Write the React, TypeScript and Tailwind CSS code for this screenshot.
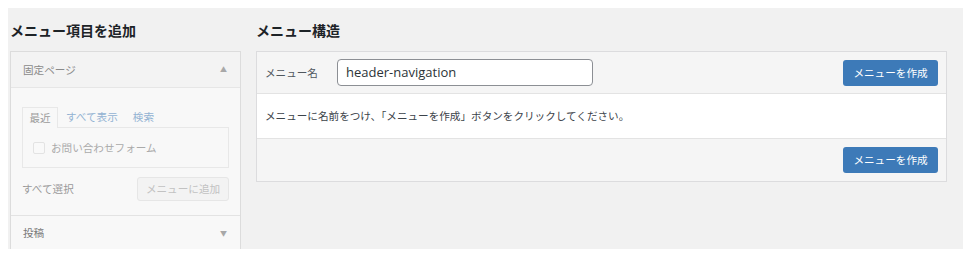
const font = { fontFamily: '"Noto Sans CJK JP", "Noto Sans", sans-serif' };

const MenuPages = () => (
  <div className="w-[231px]">
    <h2 className="text-[14px] leading-[20px] font-bold text-[#1d2327] mb-[11px]">メニュー項目を追加</h2>
    <div className="border border-[#dcdcdc] bg-[#f8f8f8] h-[200px] overflow-hidden">
      {/* 固定ページ */}
      <div className="h-[36px] flex items-center justify-between pl-[12px] pr-[13px] bg-[#f3f3f3] border-b border-[#e6e6e6]">
        <span className="text-[10.6px] text-[#8a8a8a]">固定ページ</span>
        <span className="text-[7px] text-[#a8a8a8]">▲</span>
      </div>
      <div className="pt-[18px] pl-[11px] pr-[11px] pb-[14px] border-b border-[#e3e3e3]">
        <div className="flex items-end h-[21px] text-[10.6px]">
          <div className="w-[36px] h-[21px] border border-b-0 border-[#e8e8e8] bg-[#f8f8f8] flex items-center justify-center text-[#9a9a9a] relative top-[1px]">最近</div>
          <span className="ml-[8px] h-[21px] flex items-center text-[#93b3d3]">すべて表示</span>
          <span className="ml-[15px] h-[21px] flex items-center text-[#93b3d3]">検索</span>
        </div>
        <div className="h-[41px] border border-[#e8e8e8] flex items-center pl-[10px]">
          <span className="w-[12px] h-[12px] border border-[#e3e3e3] bg-[#f9f9f9] rounded-[2px]" />
          <span className="ml-[6px] text-[10.6px] text-[#aaaaaa]">お問い合わせフォーム</span>
        </div>
        <div className="mt-[9px] flex items-center justify-between">
          <span className="text-[10.6px] text-[#9a9a9a]">すべて選択</span>
          <span className="w-[92px] h-[24px] border border-[#e6e6e6] bg-[#f3f3f3] rounded-[3px] flex items-center justify-center text-[10.6px] text-[#c2c2c2]">メニューに追加</span>
        </div>
      </div>
      {/* 投稿 */}
      <div className="h-[34px] flex items-center justify-between pl-[12px] pr-[13px]">
        <span className="text-[10.6px] text-[#7a7a7a]">投稿</span>
        <span className="text-[7px] text-[#a8a8a8]">▼</span>
      </div>
    </div>
  </div>
);

const CreateButton = () => (
  <button className="w-[95px] h-[26px] bg-[#3d7ab8] rounded-[3px] text-white text-[10.6px] flex items-center justify-center">
    メニューを作成
  </button>
);

const MenuStructure = () => (
  <div className="w-[691px]">
    <h2 className="text-[14px] leading-[20px] font-bold text-[#1d2327] mb-[11px]">メニュー構造</h2>
    <div className="border border-[#dcdcde] bg-white">
      <div className="h-[42px] bg-[#f5f5f5] border-b border-[#e3e3e3] flex items-center pl-[8px] pr-[8px]">
        <span className="text-[10.6px] text-[#50575e] w-[72px]">メニュー名</span>
        <div className="w-[256px] h-[27px] border border-[#8c8f94] rounded-[4px] bg-white flex items-center pl-[8px] text-[13px] text-[#2c3338]" style={{ fontFamily: '"Open Sans", "Noto Sans", sans-serif' }}>
          header-navigation
        </div>
        <div className="ml-auto">
          <CreateButton />
        </div>
      </div>
      <div className="h-[44px] flex items-center pl-[8px] text-[10.6px] text-[#3c434a]">
        メニューに名前をつけ、「メニューを作成」ボタンをクリックしてください。
      </div>
      <div className="h-[43px] bg-[#f5f5f5] border-t border-[#e3e3e3] flex items-center justify-end pr-[8px]">
        <CreateButton />
      </div>
    </div>
  </div>
);

export default function App() {
  return (
    <div className="w-[970px] h-[254px] bg-white pt-[8px] pl-[8px] overflow-hidden" style={font}>
      <div className="w-[955px] h-[241px] bg-[#f1f1f1] pl-[2px] pt-[12px] flex gap-[15px] overflow-hidden">
        <MenuPages />
        <MenuStructure />
      </div>
    </div>
  );
}
